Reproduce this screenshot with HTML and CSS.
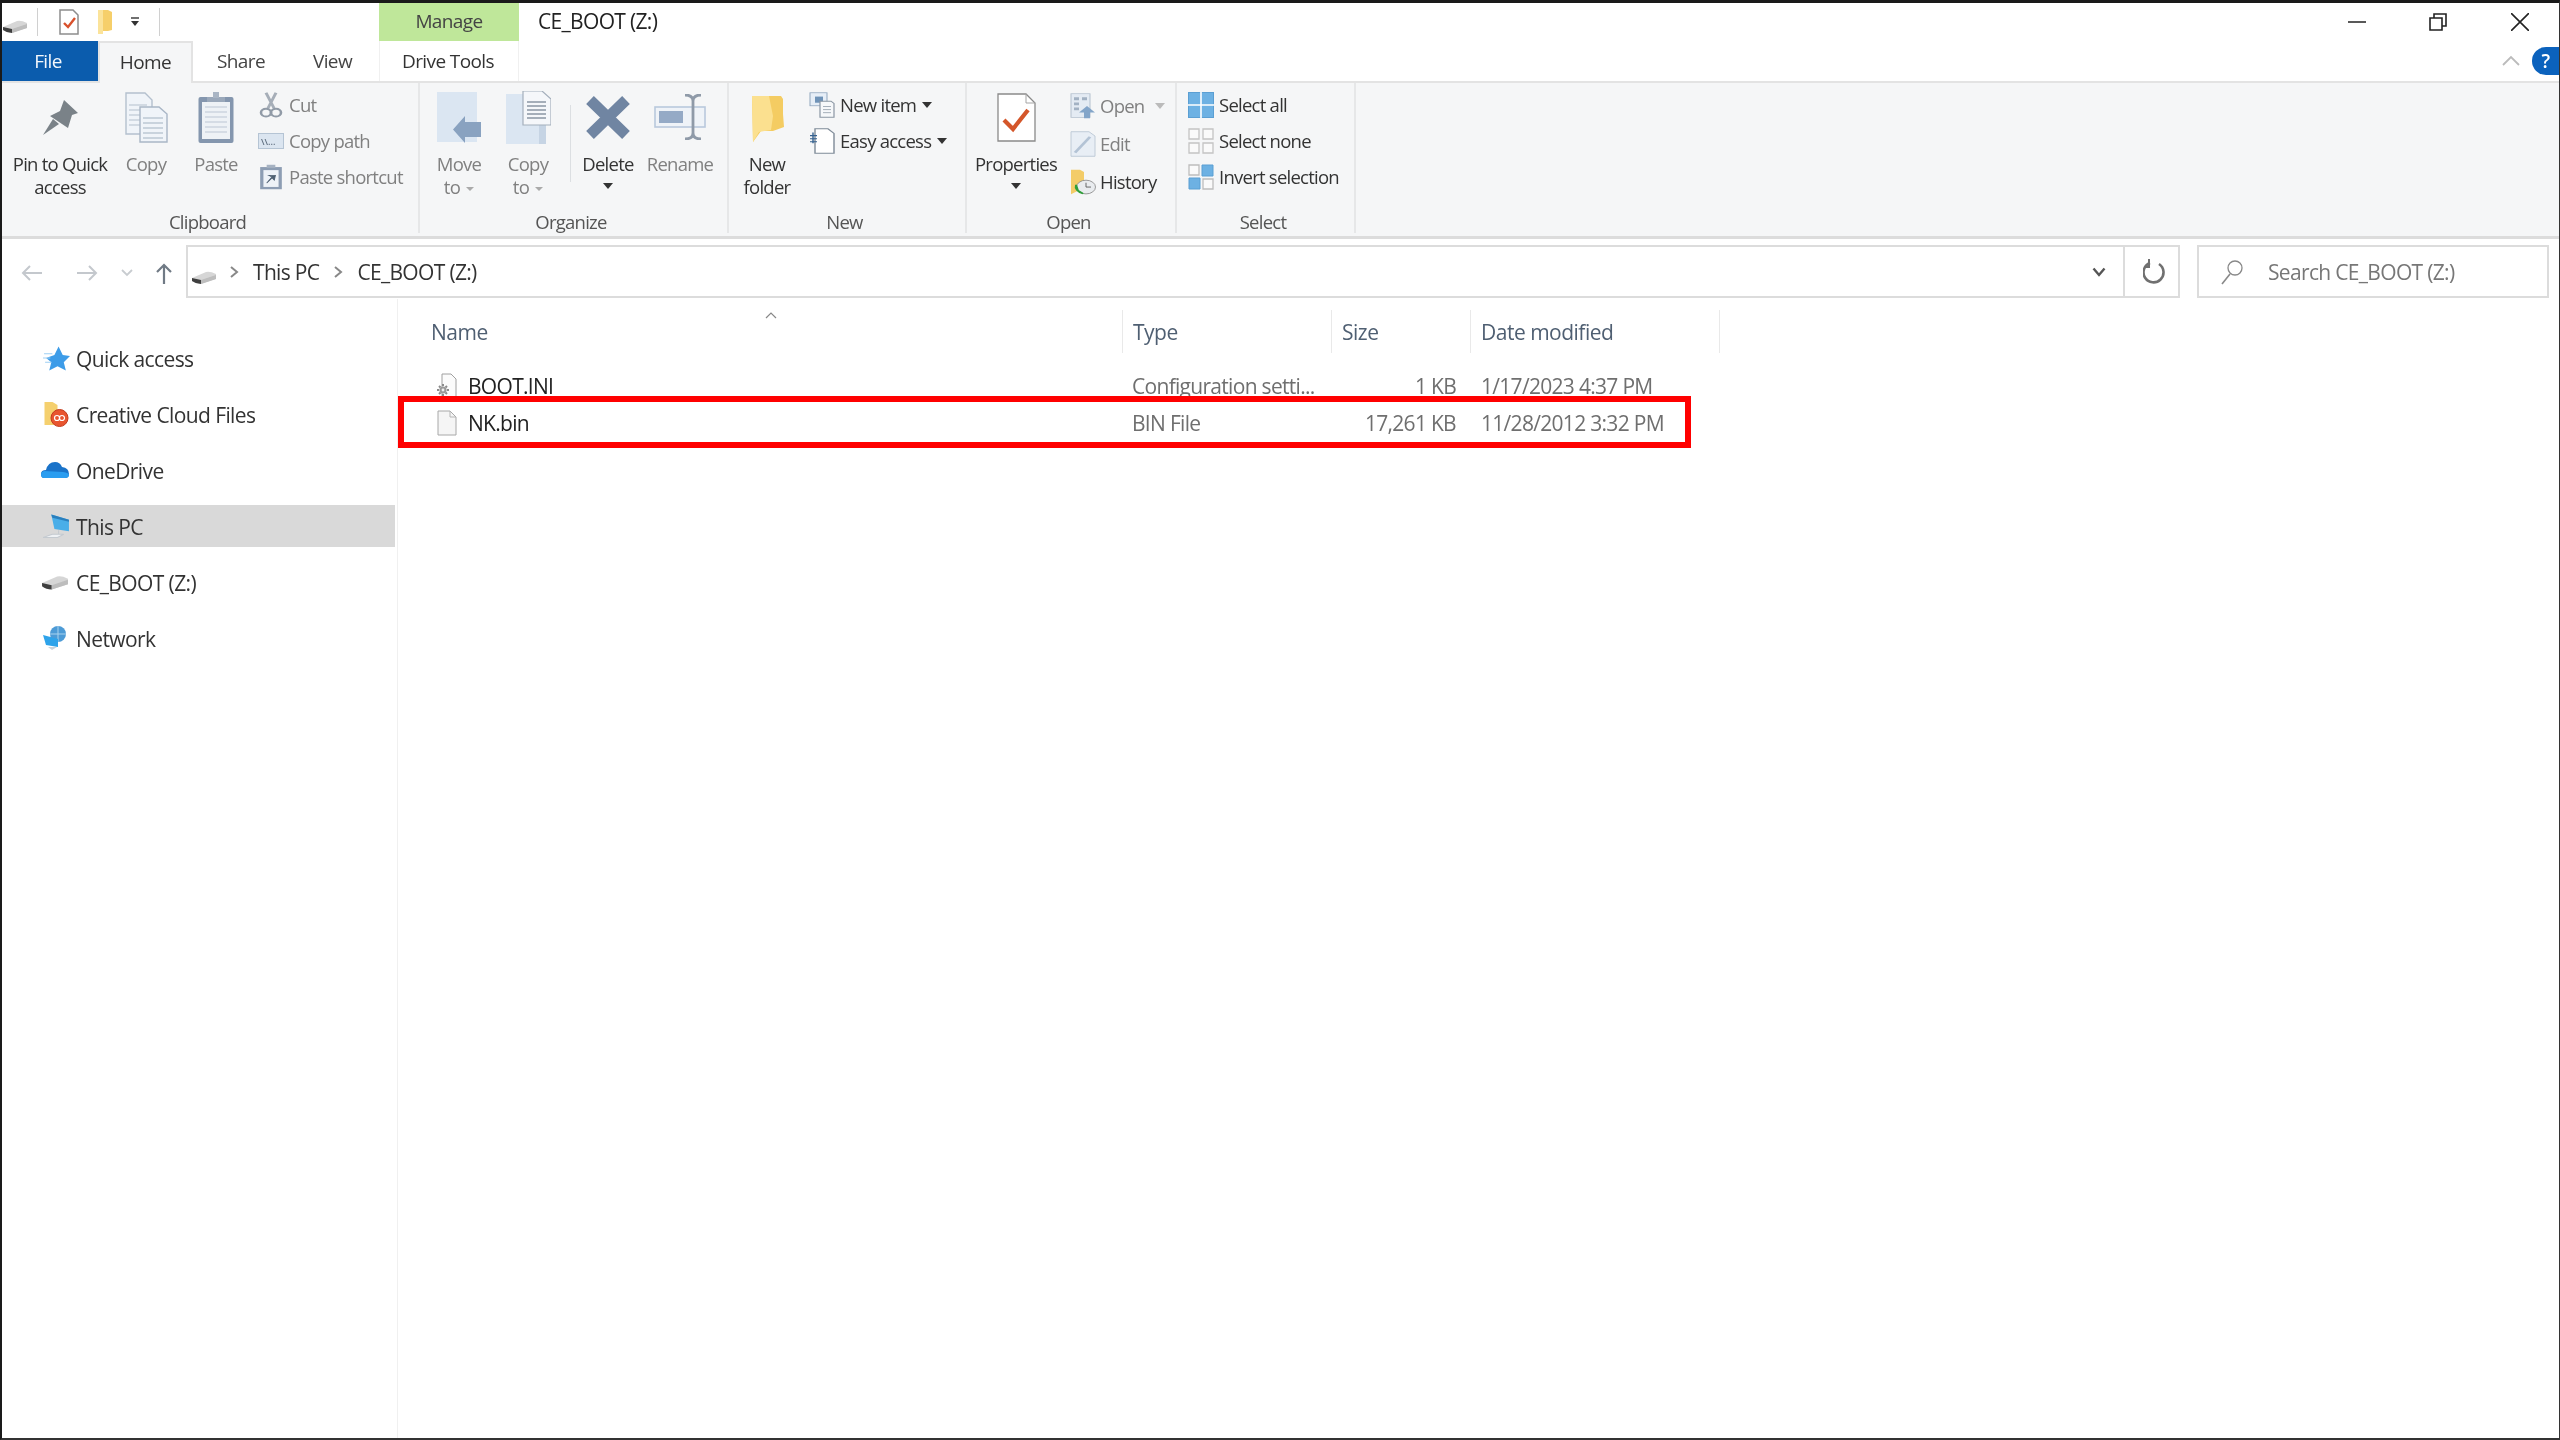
FILE: index.html
```html
<!DOCTYPE html>
<html lang="en">
<head>
<meta charset="utf-8">
<title>CE_BOOT (Z:)</title>
<link rel="stylesheet" href="styles.css">
</head>
<body>
<svg class="defs" aria-hidden="true">
  <symbol id="drive" viewBox="0 0 26 16">
    <path d="M1 9 L15 3 Q19 2 25 5 L25 10 L10 15 Q5 15 1 12Z" fill="#d6d6d6"/>
    <path d="M1 9 L10 11 L10 15 Q5 15 1 12Z" fill="#3f3f3f"/>
    <path d="M10 11 L25 6 L25 10 L10 15Z" fill="#bdbdbd"/>
  </symbol>
  <symbol id="chev" viewBox="0 0 10 14"><path d="M2 2 L8 7 L2 12" fill="none" stroke="#888" stroke-width="2"/></symbol>
</svg>
<div class="window">
  <header class="titlebar">
    <div class="qat">
      <svg class="qi-drive"><use href="#drive"/></svg>
      <span class="qsep"></span>
      <svg class="qi-check" viewBox="0 0 22 26"><path d="M2 1H15L20 6V25H2Z" fill="#fff" stroke="#8d8d8d" stroke-width="1.5"/><path d="M6 14l4 4 7-9" fill="none" stroke="#d9512c" stroke-width="2.4"/></svg>
      <svg class="qi-folder" viewBox="0 0 16 26"><path d="M1 1H11L15 3V21L11 22H4L1 25Z" fill="#f6cf6a"/><path d="M1 1H6V25H1Z" fill="#fbe39a"/></svg>
      <svg class="qi-caret" viewBox="0 0 12 12"><path d="M2 2H10" stroke="#333" stroke-width="1.4"/><path d="M2 5H10L6 10Z" fill="#333"/></svg>
      <span class="qsep qsep-b"></span>
    </div>
    <div class="manage">Manage</div>
    <div class="title">CE_BOOT (Z:)</div>
    <div class="controls">
      <svg class="ctl ctl-min" viewBox="0 0 18 18"><path d="M0 9H18" stroke="#222" stroke-width="1.5"/></svg>
      <svg class="ctl ctl-max" viewBox="0 0 18 18"><path d="M1 5H13V17H1Z M5 5V1H17V13H13" fill="none" stroke="#222" stroke-width="1.6"/></svg>
      <svg class="ctl ctl-close" viewBox="0 0 18 18"><path d="M0 0L18 18M18 0L0 18" stroke="#222" stroke-width="1.6"/></svg>
    </div>
  </header>

  <nav class="tabs">
    <div class="tab tab-file">File</div>
    <div class="tab tab-home">Home</div>
    <div class="tab tab-share">Share</div>
    <div class="tab tab-view">View</div>
    <div class="tab tab-drive">Drive Tools</div>
    <div class="tabs-end">
      <svg class="collapse" viewBox="0 0 18 12"><path d="M1 10L9 2L17 10" fill="none" stroke="#bbb" stroke-width="1.8"/></svg>
      <div class="help">?</div>
    </div>
  </nav>

  <section class="ribbon">
    <div class="group g-clip">
      <div class="gbody">
        <div class="big w-pin">
          <div class="bigicon"><svg width="35" height="35" viewBox="0 0 35 35"><path d="M21 0L35 13L29 15L25 28L7 16L17 11Z" fill="#7a8288"/><path d="M0 35L10 19L16 24Z" fill="#7a8288"/></svg></div>
          <span>Pin to Quick</span><span>access</span>
        </div>
        <div class="big dim w-copy">
          <div class="bigicon"><svg width="43" height="51" viewBox="0 0 43 51"><path d="M1 1H20L27 8V42H1Z" fill="#f0f4f9" stroke="#b4c0ce" stroke-width="1.4"/><path d="M4 13H22M4 18H22M4 23H22M4 28H22M4 33H22" stroke="#c8d1db" stroke-width="1.4"/><path d="M15 15H34L42 22V50H15Z" fill="#f0f4f9" stroke="#a9b6c6" stroke-width="1.4"/><path d="M18 26H38M18 31H38M18 36H38M18 41H38M18 46H38" stroke="#bcc7d4" stroke-width="1.5"/></svg></div>
          <span>Copy</span>
        </div>
        <div class="big dim w-paste">
          <div class="bigicon"><svg width="36" height="51" viewBox="0 0 36 51"><rect x="0.5" y="5" width="35" height="46" rx="2" fill="#8496ae"/><rect x="4" y="10" width="28" height="37" fill="#eef2f6"/><path d="M7 15H29M7 20H29M7 25H29M7 30H29M7 35H29M7 40H29" stroke="#cdd5df" stroke-width="1.4"/><path d="M9 5H27V10H9Z" fill="#9aa8ba"/><path d="M15 0H21V6H15Z" fill="#a9b5c4"/></svg></div>
          <span>Paste</span>
        </div>
        <div class="smallcol">
          <div class="small dim">
            <svg class="si" preserveAspectRatio="none" viewBox="0 0 26 34"><path d="M8 1L16 21M18 1L10 21" stroke="#a6aeb8" stroke-width="3"/><circle cx="8" cy="27" r="5" fill="none" stroke="#919ba7" stroke-width="2.6"/><circle cx="18" cy="27" r="5" fill="none" stroke="#919ba7" stroke-width="2.6"/></svg>
            <span>Cut</span>
          </div>
          <div class="small dim">
            <svg class="si si-path" viewBox="0 0 26 16"><rect x="0.5" y="0.5" width="25" height="15" fill="#dbe5f0" stroke="#b5c4d4"/><text x="3" y="12" class="sitext">\\...</text></svg>
            <span>Copy path</span>
          </div>
          <div class="small dim">
            <svg class="si" preserveAspectRatio="none" viewBox="0 0 24 34"><rect x="2" y="4" width="20" height="29" fill="#8d9db3"/><rect x="5" y="8" width="14" height="22" fill="#eef2f7"/><path d="M8 1H16V5H8Z" fill="#a6b2c2"/><path d="M8 25L13 18L15 21L16 15H10L13 17Z" fill="#4f6072" stroke="#4f6072"/></svg>
            <span>Paste shortcut</span>
          </div>
        </div>
      </div>
      <div class="glabel">Clipboard</div>
    </div>

    <div class="group g-org">
      <div class="gbody">
        <div class="big dim w-move">
          <div class="bigicon"><svg width="44" height="51" viewBox="0 0 44 51"><rect x="0" y="0" width="40" height="50" fill="#dbe6f2"/><path d="M44 30V45H28V51L16 37.5L28 24V30Z" fill="#89a2c0"/></svg></div>
          <span>Move</span><span class="caretline">to <i class="caret-dim"></i></span>
        </div>
        <div class="big dim w-copyto">
          <div class="bigicon"><svg width="45" height="53" viewBox="0 0 45 53"><rect x="0" y="3" width="40" height="50" fill="#dbe6f2"/><rect x="33" y="3" width="7" height="50" fill="#c6d4e4"/><path d="M17 0H36L45 8V34H17Z" fill="#f5f7fa" stroke="#a4afbc" stroke-width="1.2"/><path d="M21 11H40M21 15H40M21 19H40M21 23H40M21 27H40" stroke="#8a96a4" stroke-width="1.6"/></svg></div>
          <span>Copy</span><span class="caretline">to <i class="caret-dim"></i></span>
        </div>
        <div class="org-sep"></div>
        <div class="big w-del">
          <div class="bigicon"><svg width="44" height="43" viewBox="0 0 44 43"><path d="M4 4L40 39M40 4L4 39" stroke="#7085a2" stroke-width="11"/></svg></div>
          <span>Delete</span><i class="caret"></i>
        </div>
        <div class="big dim w-ren">
          <div class="bigicon"><svg width="52" height="46" viewBox="0 0 52 46"><rect x="1" y="13" width="50" height="20" fill="#eff3f8" stroke="#b9c9dc" stroke-width="1.6"/><rect x="5" y="17" width="24" height="12" fill="#95aac6"/><path d="M31 1Q39 1 39 7V39Q39 45 31 45M47 1Q39 1 39 7M47 45Q39 45 39 39" fill="none" stroke="#8f9aa8" stroke-width="2.8"/></svg></div>
          <span>Rename</span>
        </div>
      </div>
      <div class="glabel">Organize</div>
    </div>

    <div class="group g-new">
      <div class="gbody">
        <div class="big w-folder">
          <div class="bigicon bigicon-low"><svg width="33" height="46" viewBox="0 0 33 46"><path d="M1 0H30L32 3V18L33 31L22 35H10L2 46Z" fill="#f4cc62"/><path d="M1 0H18L22 20L20 34L8 36L2 46Z" fill="#fbe08f"/></svg></div>
          <span>New</span><span>folder</span>
        </div>
        <div class="smallcol">
          <div class="small">
            <svg class="si" preserveAspectRatio="none" viewBox="0 0 26 34"><rect x="1" y="1" width="17" height="17" fill="#e6eef7" stroke="#8fa5bd"/><rect x="6" y="6" width="8" height="8" fill="#6f93b8"/><path d="M11 12H22L25 15V33H11Z" fill="#f6f8fa" stroke="#8a96a3" stroke-width="1.2"/><path d="M14 19H22M14 23H22M14 27H22" stroke="#9aa5b1"/></svg>
            <span>New item</span><i class="caret"></i>
          </div>
          <div class="small">
            <svg class="si" preserveAspectRatio="none" viewBox="0 0 26 34"><path d="M6 1H19L25 7V33H6Z" fill="#fff" stroke="#7f8b98" stroke-width="1.4"/><path d="M4 6V20M1 10H8M1 14H8M1 18H8" stroke="#35618f" stroke-width="1.4"/></svg>
            <span>Easy access</span><i class="caret"></i>
          </div>
        </div>
      </div>
      <div class="glabel">New</div>
    </div>

    <div class="group g-open">
      <div class="gbody">
        <div class="big w-props">
          <div class="bigicon"><svg width="39" height="49" viewBox="0 0 39 49"><path d="M1 1H29L38 10V48H1Z" fill="#fff" stroke="#8a8a8a" stroke-width="1.3"/><path d="M29 1V10H38" fill="none" stroke="#a5a5a5"/><path d="M7 27L16 36L31 17" fill="none" stroke="#d4562a" stroke-width="4.2"/></svg></div>
          <span>Properties</span><i class="caret"></i>
        </div>
        <div class="smallcol smallcol-open">
          <div class="small dim">
            <svg class="si si-o" preserveAspectRatio="none" viewBox="0 0 26 36"><rect x="1" y="1" width="19" height="33" fill="#e4ebf3" stroke="#b3c0ce"/><path d="M4 6H9V10H4ZM4 13H9V17H4ZM4 20H9V24H4ZM12 6H17V10H12Z" fill="#a3b2c3"/><path d="M17 18L25 27H20V35H14V27H9Z" fill="#83a5c9"/></svg>
            <span>Open</span><i class="caret-dim caret-open"></i>
          </div>
          <div class="small dim">
            <svg class="si si-o" preserveAspectRatio="none" viewBox="0 0 26 36"><path d="M1 1H19L25 7V35H1Z" fill="#e8eef5" stroke="#b8c5d3"/><path d="M5 30L20 8" stroke="#b3c3d5" stroke-width="3"/></svg>
            <span>Edit</span>
          </div>
          <div class="small">
            <svg class="si si-o" preserveAspectRatio="none" viewBox="0 0 26 36"><path d="M1 1H10L14 4V26L1 35Z" fill="#f3cc68"/><circle cx="16" cy="25" r="9.5" fill="#e9ecef" stroke="#8b8b8b"/><path d="M16 19V25H21" stroke="#555" fill="none"/><path d="M6 22A10 10 0 0 0 13 34L8 30Z" fill="#2f9e3a" stroke="#2f9e3a" stroke-width="2"/></svg>
            <span>History</span>
          </div>
        </div>
      </div>
      <div class="glabel">Open</div>
    </div>

    <div class="group g-sel">
      <div class="gbody">
        <div class="smallcol">
          <div class="small">
            <svg class="si" viewBox="0 0 26 26"><rect x="0.5" y="0.5" width="25" height="25" fill="#6db1e3" stroke="#5b9fd3"/><path d="M13 0V26M0 13H26" stroke="#fff" stroke-width="1.6"/></svg>
            <span>Select all</span>
          </div>
          <div class="small">
            <svg class="si" viewBox="0 0 26 26"><path d="M1 1H11V11H1ZM15 1H25V11H15ZM1 15H11V25H1ZM15 15H25V25H15Z" fill="#fafafa" stroke="#c4c4c4" stroke-width="1.3"/></svg>
            <span>Select none</span>
          </div>
          <div class="small">
            <svg class="si" viewBox="0 0 26 26"><path d="M1 1H11V11H1ZM15 15H25V25H15Z" fill="#fafafa" stroke="#bdbdbd" stroke-width="1.3"/><path d="M14 1H25V12H14ZM1 14H12V25H1Z" fill="#6db1e3" stroke="#5b9fd3"/></svg>
            <span>Invert selection</span>
          </div>
        </div>
      </div>
      <div class="glabel">Select</div>
    </div>
  </section>

  <div class="addressrow">
    <svg class="nav nav-back" viewBox="0 0 22 18"><path d="M21 9H2M9 2L2 9L9 16" fill="none" stroke="#c4c8cd" stroke-width="2"/></svg>
    <svg class="nav nav-fwd" viewBox="0 0 22 18"><path d="M1 9H20M13 2L20 9L13 16" fill="none" stroke="#c4c8cd" stroke-width="2"/></svg>
    <svg class="nav nav-down" viewBox="0 0 12 8"><path d="M1 1L6 6L11 1" fill="none" stroke="#c8ccd0" stroke-width="1.8"/></svg>
    <svg class="nav nav-up" viewBox="0 0 18 22"><path d="M9 21V2M2 9L9 2L16 9" fill="none" stroke="#707a85" stroke-width="2.2"/></svg>
    <div class="addressbar">
      <svg class="ad-drive"><use href="#drive"/></svg>
      <svg class="crumb crumb-a"><use href="#chev"/></svg>
      <span class="ad-text">This PC</span>
      <svg class="crumb crumb-b"><use href="#chev"/></svg>
      <span class="ad-text">CE_BOOT (Z:)</span>
      <svg class="ad-down" viewBox="0 0 14 10"><path d="M1.5 1.5L7 8L12.5 1.5" fill="none" stroke="#555" stroke-width="2.4"/></svg>
      <div class="refresh">
        <svg viewBox="0 0 22 26" width="22" height="26"><path d="M7 4A10 10 0 1 0 16 5" fill="none" stroke="#707070" stroke-width="2.6"/><path d="M6 0V8H1" fill="none" stroke="#707070" stroke-width="2"/></svg>
      </div>
    </div>
    <div class="search">
      <svg viewBox="0 0 22 26" width="22" height="26"><circle cx="14" cy="9" r="7" fill="none" stroke="#888" stroke-width="1.3"/><path d="M9 15L1 25" stroke="#888" stroke-width="1.6"/></svg>
      <span>Search CE_BOOT (Z:)</span>
    </div>
  </div>

  <main class="main">
    <aside class="sidebar">
      <div class="navitem">
        <svg class="ni" viewBox="0 0 26 24"><path d="M15 1L19 9L26 10L20 16L22 24L14 20L6 24L8 16L3 12L11 9Z" fill="#3d9ce8"/><path d="M1 8H9M0 12H7M2 16H8" stroke="#9fd0f4"/></svg>
        <span>Quick access</span>
      </div>
      <div class="navitem">
        <svg class="ni" viewBox="0 0 26 26"><path d="M1 1H9L14 4V24H1Z" fill="#f5d06e"/><circle cx="16" cy="17" r="8.5" fill="#e8552f" stroke="#c23a1c"/><path d="M11 17a2.5 2.5 0 0 1 5 0a2.5 2.5 0 0 0 5 0M11 17a2.5 2.5 0 0 0 5 0a2.5 2.5 0 0 1 5 0" fill="none" stroke="#fff" stroke-width="1.2"/></svg>
        <span>Creative Cloud Files</span>
      </div>
      <div class="navitem">
        <svg class="ni ni-wide" viewBox="0 0 28 18"><path d="M3 17Q0 17 0 13Q0 9 5 9Q7 1 14 1Q19 1 21 6Q28 7 28 13Q28 17 24 17Z" fill="#1a73c9"/><path d="M3 17Q0 17 0 13Q0 11 3 10L22 11Q28 12 28 14Q28 17 24 17Z" fill="#2a9df0"/></svg>
        <span>OneDrive</span>
      </div>
      <div class="navitem navitem-on">
        <svg class="ni" viewBox="0 0 26 24"><path d="M8 1L25 6V17L11 15Z" fill="#4aaee8"/><path d="M8 1L25 6V8L9 4Z" fill="#2a7fbd"/><path d="M15 16V20M9 20L0 23H14L20 20Z" fill="#eef1f4" stroke="#c4cad0"/></svg>
        <span>This PC</span>
      </div>
      <div class="navitem">
        <svg class="ni ni-wide"><use href="#drive"/></svg>
        <span>CE_BOOT (Z:)</span>
      </div>
      <div class="navitem">
        <svg class="ni ni-wide" viewBox="0 0 26 26"><circle cx="16" cy="9" r="8" fill="#4d9bd6"/><path d="M16 1V17M8 9H24" stroke="#a8d2ee"/><path d="M1 10L16 14V22L4 20Z" fill="#2ea3ea"/><path d="M6 22H15L10 25Z" fill="#c9d2da"/></svg>
        <span>Network</span>
      </div>
    </aside>

    <section class="files">
      <div class="sortcaret"><svg viewBox="0 0 12 7" width="12" height="7"><path d="M1 6L6 1L11 6" fill="none" stroke="#888" stroke-width="1.2"/></svg></div>
      <div class="head">
        <div class="hcell c-name">Name</div>
        <div class="hcell c-type">Type</div>
        <div class="hcell c-size">Size</div>
        <div class="hcell c-date">Date modified</div>
      </div>
      <div class="row">
        <div class="cell-name">
          <svg class="fi" viewBox="0 0 20 26"><path d="M5 1H14L19 6V25H5Z" fill="#fbfbfb" stroke="#a0a0a0"/><path d="M6 11V13M6 21V23M0 17H2M10 17H12M2 13L3.5 14.5M10 13L8.5 14.5M2 21L3.5 19.5M10 21L8.5 19.5" stroke="#8a8a8a" stroke-width="2"/><circle cx="6" cy="17" r="3.6" fill="#9a9a9a"/><circle cx="6" cy="17" r="1.4" fill="#eee"/></svg>
          <span>BOOT.INI</span>
        </div>
        <div class="cell-type">Configuration setti...</div>
        <div class="cell-size">1 KB</div>
        <div class="cell-date">1/17/2023 4:37 PM</div>
      </div>
      <div class="row">
        <div class="cell-name">
          <svg class="fi" viewBox="0 0 20 26"><path d="M1 1H13L19 7V25H1Z" fill="#f5f5f5" stroke="#a8a8a8"/><path d="M13 1V7H19" fill="none" stroke="#b5b5b5"/></svg>
          <span>NK.bin</span>
        </div>
        <div class="cell-type">BIN File</div>
        <div class="cell-size">17,261 KB</div>
        <div class="cell-date">11/28/2012 3:32 PM</div>
      </div>
      <div class="highlight"></div>
    </section>
  </main>
</div>
</body>
</html>
```

FILE: styles.css
```css
* { box-sizing: border-box; }
html, body { margin: 0; height: 100%; background: #fff; }
body { font-family: "Open Sans", "Noto Sans", sans-serif; font-size: 19px; color: #333; overflow: hidden; }
.defs { position: absolute; width: 0; height: 0; }
.window {
  width: 2560px; height: 1440px; display: flex; flex-direction: column;
  border-top: 3px solid #1a1a1a; border-left: 2px solid #1a1a1a; border-right: 1px solid #333; border-bottom: 2px solid #333; background: #fff;
  filter: blur(0.6px); letter-spacing: -0.6px;
}

/* Title bar */
.titlebar { height: 38px; display: flex; align-items: stretch; flex: none; }
.qat { width: 377px; display: flex; align-items: center; }
.qi-drive { width: 26px; height: 16px; margin-top: 8px; }
.qsep { width: 1px; height: 28px; background: #d0d0d0; margin-left: 9px; }
.qi-check { width: 22px; height: 26px; margin-left: 20px; }
.qi-folder { width: 16px; height: 26px; margin-left: 17px; }
.qi-caret { width: 12px; height: 12px; margin-left: 16px; }
.qsep-b { margin-left: 18px; }
.manage { width: 140px; background: #bfe79a; display: flex; align-items: center; justify-content: center; color: #444; padding-bottom: 2px; }
.title { padding-left: 19px; display: flex; align-items: center; color: #222; font-size: 21px; letter-spacing: -0.67px; padding-bottom: 2px; }
.controls { margin-left: auto; display: flex; align-items: center; padding-right: 30px; }
.ctl { width: 18px; height: 18px; display: block; }
.ctl-max { margin-left: 63px; }
.ctl-close { margin-left: 64px; }

/* Tabs */
.tabs { height: 40px; display: flex; position: relative; z-index: 1; flex: none; }
.tab { display: flex; align-items: center; justify-content: center; color: #444; }
.tab-file { width: 96px; background: #0b5cad; color: #f4f8fc; padding-right: 4px; }
.tab-home { width: 95px; height: 42px; background: #f5f6f7; border: 2px solid #e3e3e3; border-bottom: 0; color: #333; padding-bottom: 3px; }
.tab-share { width: 96px; }
.tab-view { width: 90px; padding-right: 3px; }
.tab-drive { width: 140px; border-left: 1px solid #f0f0f0; border-right: 1px solid #f0f0f0; color: #333; padding-right: 2px; }
.tabs-end { margin-left: auto; display: flex; align-items: center; }
.collapse { width: 18px; height: 12px; margin-right: 12px; }
.help {
  width: 27px; height: 28px; border-radius: 14px 0 0 14px; background: #0b62bd; color: #fff;
  display: flex; align-items: center; justify-content: center; font-weight: 600;
}

/* Ribbon */
.ribbon { height: 158px; flex: none; display: flex; background: #f5f6f7; border-top: 2px solid #e3e3e3; border-bottom: 3px solid #dcdcdc; font-size: 18.5px; letter-spacing: -0.75px; }
.group { display: flex; flex-direction: column; border-right: 2px solid #e6e7e8; margin-bottom: 3px; }
.g-clip { width: 418px; }
.g-org { width: 309px; }
.g-new { width: 238px; }
.g-open { width: 210px; }
.g-sel { width: 179px; }
.gbody { height: 128px; flex: none; display: flex; }
.glabel { text-align: center; line-height: 22px; color: #555; padding-right: 5px; }
.big { display: flex; flex-direction: column; align-items: center; line-height: 23px; white-space: nowrap; color: #333; flex: none; }
.dim, .dim span { color: #808080; }
.bigicon { height: 68.5px; display: flex; align-items: center; justify-content: center; }
.bigicon-low { padding-top: 4px; }
.w-pin { width: 116px; }
.w-copy { width: 56px; }
.w-paste { width: 84px; }
.w-move { width: 78px; }
.w-copyto { width: 60px; }
.org-sep { width: 1px; height: 77px; margin: 22px 0 0 12px; background: #dcdfe2; }
.w-del { width: 74px; }
.w-ren { width: 70px; }
.w-folder { width: 76px; margin-right: 4px; }
.w-props { width: 98px; margin-right: 5px; }
.caret { display: inline-block; width: 0; height: 0; border: 5px solid transparent; border-top: 6px solid #333; border-bottom: 0; margin-top: 8px; }
.caret-dim { display: inline-block; width: 0; height: 0; border: 4px solid transparent; border-top: 4px solid #aaa; border-bottom: 0; vertical-align: middle; margin-left: 2px; }
.small .caret { margin: 0 0 0 1px; }
.caret-open { margin-left: 6px; border-top-color: #bbb; border-width: 6px 5px 0; }
.smallcol { padding-top: 3.5px; display: flex; flex-direction: column; }
.small { height: 36px; display: flex; align-items: center; white-space: nowrap; gap: 5px; color: #333; }
.si { width: 26px; height: 26px; flex: none; }
.si-path { height: 16px; }
.smallcol-open .small { height: 38px; }
.si-o { margin-right: -1px; }
.g-sel .smallcol { margin-left: 11px; }
.sitext { font-size: 9px; font-weight: 600; fill: #5c6b7c; letter-spacing: 0; }

/* Address row */
.addressrow { height: 60px; flex: none; padding: 6px 0 0 0; display: flex; align-items: flex-start; font-size: 21px; letter-spacing: -0.67px; }
.nav { flex: none; display: block; }
.nav-back { width: 22px; height: 18px; margin: 19px 0 0 19px; }
.nav-fwd { width: 22px; height: 18px; margin: 19px 0 0 33px; }
.nav-down { width: 12px; height: 8px; margin: 24px 0 0 23px; }
.nav-up { width: 18px; height: 22px; margin: 18px 0 0 22px; }
.addressbar {
  width: 1994px; height: 53px; margin-left: 13px; border: 2px solid #dcdcdc; display: flex; align-items: center; color: #333;
}
.ad-text { padding-top: 1px; }
.ad-drive { width: 26px; height: 16px; margin: 10px 0 0 3px; flex: none; }
.crumb { width: 10px; height: 14px; flex: none; }
.crumb-a { margin: 0 14px 0 12px; }
.crumb-b { margin: 0 14px 0 14px; }
.ad-down { width: 14px; height: 10px; margin-left: auto; margin-right: 17px; }
.refresh { width: 55px; height: 100%; border-left: 2px solid #dcdcdc; display: flex; align-items: center; justify-content: center; padding-left: 4px; }
.search {
  width: 352px; height: 53px; margin-left: 17px; border: 2px solid #dcdcdc; display: flex; align-items: center; gap: 25px; padding-left: 22px; color: #777;
}
.search span { padding-top: 1px; }

/* Main */
.main { flex: 1; display: flex; min-height: 0; font-size: 21px; letter-spacing: -0.7px; }
.sidebar { width: 396px; border-right: 1px solid #f0f0f0; padding-top: 38px; display: flex; flex-direction: column; gap: 14px; flex: none; letter-spacing: -0.6px; }
.navitem { height: 42px; width: 393px; display: flex; align-items: center; padding-left: 41px; color: #333; }
.navitem span { margin-left: 6px; padding-top: 1px; }
.navitem-on { background: #d9d9d9; }
.ni { width: 27px; height: 26px; flex: none; }
.ni-wide { width: 28px; margin-left: -2px; margin-right: 1px; }

.files { flex: 1; position: relative; padding-top: 11px; }
.head { display: grid; grid-template-columns: 724px 209px 139px 250px; height: 43px; letter-spacing: -0.5px; }
.hcell { display: flex; align-items: center; color: #4f5f72; border-left: 1px solid #e9e9e9; padding-left: 10px; }
.c-name { border-left: 0; padding-left: 33px; }
.c-date { border-right: 1px solid #e9e9e9; }
.sortcaret { position: absolute; left: 367px; top: 12px; line-height: 0; }
.row { display: grid; grid-template-columns: 724px 209px 139px 250px; height: 37px; align-items: center; white-space: nowrap; }
.head + .row { margin-top: 14px; }
.cell-name { display: flex; align-items: center; padding-left: 39px; color: #222; }
.fi { width: 20px; height: 26px; margin-right: 11px; flex: none; }
.cell-type { color: #6f6f6f; padding-left: 10px; }
.cell-size { color: #6f6f6f; text-align: right; padding-right: 14px; }
.cell-date { color: #6f6f6f; padding-left: 11px; }
.highlight {
  position: absolute; left: 0; top: 97px; width: 1293px; height: 52px; border: 6px solid #f00;
}
```
